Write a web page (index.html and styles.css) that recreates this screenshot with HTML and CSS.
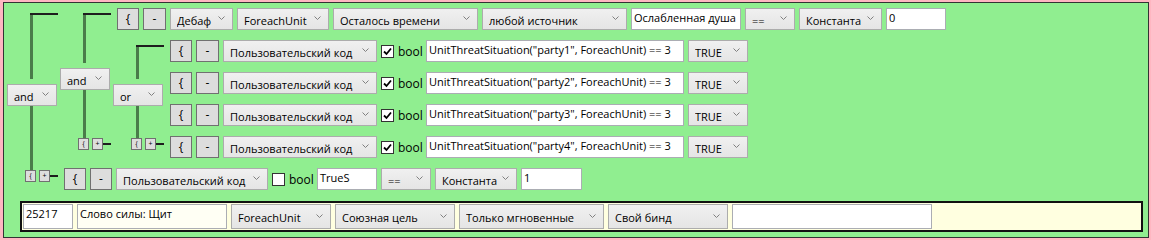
FILE: index.html
```html
<!DOCTYPE html>
<html lang="ru">
<head>
    <meta charset="UTF-8">
    <title>Условия</title>
    <link rel="stylesheet" href="styles.css">
</head>
<body>
    <div class="panel">
        <div class="group">
            <div class="tree">
                <div class="tree-top"></div>
                <div class="tree-line"></div>
                <div class="combo op"><span class="label">and</span><svg width="7" height="4"><path d="M0.5 0.5 L3.5 3.5 L6.5 0.5"/></svg></div>
                <div class="tree-line"></div>
                <div class="tree-foot"><span class="mini">{</span><span class="mini">+</span><span class="foot-line"></span></div>
            </div>
            <div class="items">
                <div class="group">
                    <div class="tree">
                        <div class="tree-top"></div>
                        <div class="tree-line"></div>
                        <div class="combo op"><span class="label">and</span><svg width="7" height="4"><path d="M0.5 0.5 L3.5 3.5 L6.5 0.5"/></svg></div>
                        <div class="tree-line"></div>
                        <div class="tree-foot"><span class="mini">{</span><span class="mini">+</span><span class="foot-line"></span></div>
                    </div>
                    <div class="items">
                        <div class="row">
                            <div class="btn w22">{</div>
                            <div class="btn w23">-</div>
                            <div class="combo w63"><span class="label">Дебаф</span><svg width="7" height="4"><path d="M0.5 0.5 L3.5 3.5 L6.5 0.5"/></svg></div>
                            <div class="combo w92"><span class="label">ForeachUnit</span><svg width="7" height="4"><path d="M0.5 0.5 L3.5 3.5 L6.5 0.5"/></svg></div>
                            <div class="combo w145"><span class="label">Осталось времени</span><svg width="7" height="4"><path d="M0.5 0.5 L3.5 3.5 L6.5 0.5"/></svg></div>
                            <div class="combo w145"><span class="label">любой источник</span><svg width="7" height="4"><path d="M0.5 0.5 L3.5 3.5 L6.5 0.5"/></svg></div>
                            <div class="field w110">Ослабленная душа</div>
                            <div class="combo w50"><span class="label">==</span><svg width="7" height="4"><path d="M0.5 0.5 L3.5 3.5 L6.5 0.5"/></svg></div>
                            <div class="combo w83"><span class="label">Константа</span><svg width="7" height="4"><path d="M0.5 0.5 L3.5 3.5 L6.5 0.5"/></svg></div>
                            <div class="field w60">0</div>
                        </div>
                        <div class="group">
                            <div class="tree">
                                <div class="tree-top"></div>
                                <div class="tree-line"></div>
                                <div class="combo op"><span class="label">or</span><svg width="7" height="4"><path d="M0.5 0.5 L3.5 3.5 L6.5 0.5"/></svg></div>
                                <div class="tree-line"></div>
                                <div class="tree-foot"><span class="mini">{</span><span class="mini">+</span><span class="foot-line"></span></div>
                            </div>
                            <div class="items">
                                <div class="row">
                                    <div class="btn w22">{</div>
                                    <div class="btn w23">-</div>
                                    <div class="combo w154"><span class="label">Пользовательский код</span><svg width="7" height="4"><path d="M0.5 0.5 L3.5 3.5 L6.5 0.5"/></svg></div>
                                    <div class="check"><svg width="11" height="11"><path d="M2 5.5 L4.5 8 L9 2.5"/></svg></div>
                                    <div class="bool">bool</div>
                                    <div class="field w258">UnitThreatSituation("party1", ForeachUnit) == 3</div>
                                    <div class="combo w60"><span class="label">TRUE</span><svg width="7" height="4"><path d="M0.5 0.5 L3.5 3.5 L6.5 0.5"/></svg></div>
                                </div>
                                <div class="row">
                                    <div class="btn w22">{</div>
                                    <div class="btn w23">-</div>
                                    <div class="combo w154"><span class="label">Пользовательский код</span><svg width="7" height="4"><path d="M0.5 0.5 L3.5 3.5 L6.5 0.5"/></svg></div>
                                    <div class="check"><svg width="11" height="11"><path d="M2 5.5 L4.5 8 L9 2.5"/></svg></div>
                                    <div class="bool">bool</div>
                                    <div class="field w258">UnitThreatSituation("party2", ForeachUnit) == 3</div>
                                    <div class="combo w60"><span class="label">TRUE</span><svg width="7" height="4"><path d="M0.5 0.5 L3.5 3.5 L6.5 0.5"/></svg></div>
                                </div>
                                <div class="row">
                                    <div class="btn w22">{</div>
                                    <div class="btn w23">-</div>
                                    <div class="combo w154"><span class="label">Пользовательский код</span><svg width="7" height="4"><path d="M0.5 0.5 L3.5 3.5 L6.5 0.5"/></svg></div>
                                    <div class="check"><svg width="11" height="11"><path d="M2 5.5 L4.5 8 L9 2.5"/></svg></div>
                                    <div class="bool">bool</div>
                                    <div class="field w258">UnitThreatSituation("party3", ForeachUnit) == 3</div>
                                    <div class="combo w60"><span class="label">TRUE</span><svg width="7" height="4"><path d="M0.5 0.5 L3.5 3.5 L6.5 0.5"/></svg></div>
                                </div>
                                <div class="row">
                                    <div class="btn w22">{</div>
                                    <div class="btn w23">-</div>
                                    <div class="combo w154"><span class="label">Пользовательский код</span><svg width="7" height="4"><path d="M0.5 0.5 L3.5 3.5 L6.5 0.5"/></svg></div>
                                    <div class="check"><svg width="11" height="11"><path d="M2 5.5 L4.5 8 L9 2.5"/></svg></div>
                                    <div class="bool">bool</div>
                                    <div class="field w258">UnitThreatSituation("party4", ForeachUnit) == 3</div>
                                    <div class="combo w60"><span class="label">TRUE</span><svg width="7" height="4"><path d="M0.5 0.5 L3.5 3.5 L6.5 0.5"/></svg></div>
                                </div>
                            </div>
                        </div>
                    </div>
                </div>
                <div class="row">
                    <div class="btn w22">{</div>
                    <div class="btn w22">-</div>
                    <div class="combo w152"><span class="label">Пользовательский код</span><svg width="7" height="4"><path d="M0.5 0.5 L3.5 3.5 L6.5 0.5"/></svg></div>
                    <div class="check"></div>
                    <div class="bool">bool</div>
                    <div class="field w60">TrueS</div>
                    <div class="combo w50"><span class="label">==</span><svg width="7" height="4"><path d="M0.5 0.5 L3.5 3.5 L6.5 0.5"/></svg></div>
                    <div class="combo w82"><span class="label">Константа</span><svg width="7" height="4"><path d="M0.5 0.5 L3.5 3.5 L6.5 0.5"/></svg></div>
                    <div class="field w61">1</div>
                </div>
            </div>
        </div>

        <div class="spell">
            <div class="field w50">25217</div>
            <div class="field name w150">Слово силы: Щит</div>
            <div class="combo w100"><span class="label">ForeachUnit</span><svg width="7" height="4"><path d="M0.5 0.5 L3.5 3.5 L6.5 0.5"/></svg></div>
            <div class="combo w120"><span class="label">Союзная цель</span><svg width="7" height="4"><path d="M0.5 0.5 L3.5 3.5 L6.5 0.5"/></svg></div>
            <div class="combo w145"><span class="label">Только мгновенные</span><svg width="7" height="4"><path d="M0.5 0.5 L3.5 3.5 L6.5 0.5"/></svg></div>
            <div class="combo w120"><span class="label">Свой бинд</span><svg width="7" height="4"><path d="M0.5 0.5 L3.5 3.5 L6.5 0.5"/></svg></div>
            <div class="field w200"></div>
        </div>
    </div>
</body>
</html>
```

FILE: styles.css
```css
* {
    box-sizing: border-box;
}

body {
    margin: 0;
    padding: 2px 2px 2px 3px;
    background: #ffb6c1;
    font-family: 'Open Sans', 'Noto Sans', sans-serif;
    font-size: 11px;
    color: #000;
}

.panel {
    height: 236px;
    background: #90ee90;
    border: 1px solid #333;
    padding-left: 3px;
}

/* condition tree */
.group {
    display: flex;
}

.items {
    display: flex;
    flex-direction: column;
}

.tree {
    width: 50px;
    flex-shrink: 0;
    margin-right: 3px;
    display: flex;
    flex-direction: column;
    padding: 10px 0 13px;
}

.tree-top {
    height: 2px;
    margin: 0 -1px 0 23px;
    background: #1e1e1e;
}

.tree-line {
    flex: 1;
    width: 3px;
    margin-left: 23px;
    background: #4a7c4a;
}

.op {
    margin-top: 5px;
    width: 50px;
}

.tree-foot {
    height: 12px;
    display: flex;
    align-items: center;
    gap: 3px;
    padding-left: 18px;
    margin-right: -1px;
}

.mini {
    width: 11px;
    height: 12px;
    border: 1px solid #707070;
    background: #ddd;
    font-size: 7px;
    line-height: 10px;
    text-align: center;
}

.foot-line {
    flex: 1;
    height: 2px;
    margin-left: -3px;
    background: #1e1e1e;
}

.row {
    display: flex;
    align-items: center;
    gap: 4px;
    padding: 5px 0 5px 4px;
}

/* controls */
.btn {
    height: 22px;
    border: 1px solid #707070;
    background: #ddd;
    display: flex;
    align-items: center;
    justify-content: center;
    font-size: 12px;
    padding-bottom: 1px;
}

.combo {
    height: 22px;
    flex-shrink: 0;
    display: flex;
    align-items: center;
    border: 1px solid #acacac;
    background: linear-gradient(#f0f0f0, #e5e5e5);
    padding: 2px 0 0 6px;
}

.combo .label {
    flex: 1;
    white-space: nowrap;
    overflow: hidden;
}

.combo svg {
    margin: 0 7px 4px 0;
    fill: none;
    stroke: #808080;
    stroke-width: 1;
}

.field {
    height: 22px;
    flex-shrink: 0;
    border: 1px solid #abadb3;
    background: #fff;
    padding: 1px 2px;
    line-height: 16px;
    white-space: nowrap;
    overflow: hidden;
}

.check {
    width: 13px;
    height: 13px;
    border: 1px solid #333;
    background: #fff;
}

.check svg {
    display: block;
    fill: none;
    stroke: #000;
    stroke-width: 1.8;
}

.bool {
    width: 24px;
    font-size: 12px;
}

/* spell line */
.spell {
    display: flex;
    gap: 4px;
    margin: 6px 5px 0 13px;
    border: 2px solid #111;
    background: #ffffe0;
    padding: 1px;
}

.spell .combo,
.spell .field {
    height: 25px;
}

.spell .name {
    background: #fffff4;
}

.w22 { width: 22px; }
.w23 { width: 23px; }
.w50 { width: 50px; }
.w60 { width: 60px; }
.w61 { width: 61px; }
.w63 { width: 63px; }
.w82 { width: 82px; }
.w83 { width: 83px; }
.w92 { width: 92px; }
.w100 { width: 100px; }
.w110 { width: 110px; }
.w120 { width: 120px; }
.w145 { width: 145px; }
.w150 { width: 150px; }
.w152 { width: 152px; }
.w154 { width: 154px; }
.w200 { width: 200px; }
.w258 { width: 258px; }
```
